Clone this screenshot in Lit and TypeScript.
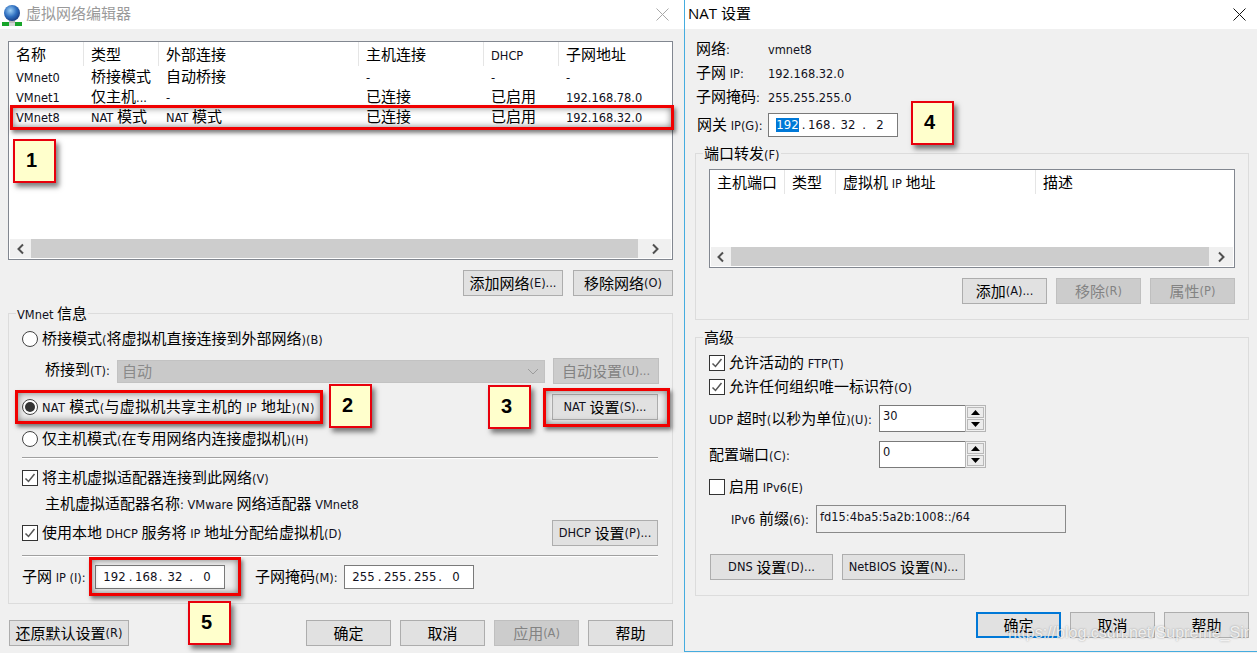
import { LitElement, html, css } from "lit";
import { customElement } from "lit/decorators.js";

/* Splits mixed text into CJK and Latin runs, which the reference draws at different sizes. */
const T = (s: string) =>
  s.split(/([\u3000-\u9fff\uff00-\uffef]+)/).filter(Boolean).map((p) =>
    /[\u3000-\u9fff\uff00-\uffef]/.test(p) ? html`<span class="c">${p}</span>` : html`<span class="l">${p}</span>`
  );

const chevron = (d: "l" | "r") => html`<svg width="10" height="12" viewBox="0 0 10 12"><path d="${d === "l" ? "M7 1.5 2.5 6 7 10.5" : "M3 1.5 7.5 6 3 10.5"}" fill="none" stroke="#505050" stroke-width="2"/></svg>`;
const scrollbar = (a: string, b: string) => html`<div class="sb"><div class="sb-btn ${a}">${chevron("l")}</div><div class="sb-thumb"></div><div class="sb-btn ${b}">${chevron("r")}</div></div>`;
const btn = (s: string, cls = "") => html`<div class="btn ${cls}">${T(s)}</div>`;
const radio = (s: string, on = false) => html`<div class="opt"><span class="radio ${on ? "on" : ""}"></span><span>${T(s)}</span></div>`;
const check = (s: string, on = true) => html`<div class="opt"><span class="chk">${on ? html`<svg width="14" height="14" viewBox="0 0 14 14"><path d="M2.5 7.5 5.5 10.5 11.5 3" fill="none" stroke="#555" stroke-width="1.5"/></svg>` : ""}</span><span>${T(s)}</span></div>`;
const ip = (o: string[], hl = false) => html`<div class="ip">
  <span class="oct"><span class="${hl ? "hl" : ""}">${o[0]}</span></span><span class="oct">.</span><span class="oct">${o[1]}</span><span class="oct">.</span><span class="oct">${o[2]}</span><span class="oct">.</span><span class="oct">${o[3]}</span>
</div>`;
const spin = (v: string) => html`<div class="spin"><div class="spin-in l">${v}</div><div class="spin-btns">
  <div class="spin-b"><svg width="9" height="5" viewBox="0 0 9 5"><path d="M4.5 0 9 5H0z"/></svg></div>
  <div class="spin-b"><svg width="9" height="5" viewBox="0 0 9 5"><path d="M4.5 5 0 0H9z"/></svg></div>
</div></div>`;

const shared = css`
  :host { display: block; font: 15px/20px "Noto Sans CJK SC", "Noto Sans", sans-serif; color: #000; }
  .c { font-family: "Noto Sans CJK SC", sans-serif; font-size: 15px; white-space: pre; }
  .l { font-family: "DejaVu Sans Condensed", "DejaVu Sans", sans-serif; font-stretch: condensed; font-size: 12.7px; white-space: pre; color: #101020; }
  .win { height: 100%; display: flex; flex-direction: column; box-sizing: border-box; }
  .title { height: 29px; box-sizing: border-box; padding-bottom: 3px; flex: none; background: #fff; display: flex; align-items: center; }
  .body { flex: 1; background: #f0f0f0; }
  .close { margin-left: auto; display: flex; margin-top: 3px; }
  .btn { box-sizing: border-box; height: 26px; border: 1px solid #adadad; background: #e1e1e1; display: flex; align-items: center; justify-content: center; white-space: pre; flex: none; }
  .btn.dis { background: #ccc; border-color: #bfbfbf; }
  .btn.dis span { color: #838383; }
  .btn.focus { border: 2px solid #0078d7; }
  .w85 { width: 85px; }
  .w100 { width: 100px; }
  .w106 { width: 106px; }
  .w120 { width: 120px; }
  .w123 { width: 123px; }
  .row { display: flex; align-items: center; }
  .end { justify-content: flex-end; gap: 9px; }
  .push { margin-left: auto; }
  .opt { height: 20px; display: flex; align-items: center; gap: 4px; white-space: pre; }
  .radio { width: 16px; height: 16px; box-sizing: border-box; border: 1px solid #444; border-radius: 50%; background: #fff; flex: none; display: flex; align-items: center; justify-content: center; }
  .radio.on::after { content: ""; width: 10px; height: 10px; border-radius: 50%; background: #333; }
  .chk { width: 16px; height: 16px; box-sizing: border-box; border: 1px solid #333; background: #fff; flex: none; display: flex; align-items: center; justify-content: center; }
  .group { border: 1px solid #dcdcdc; box-sizing: border-box; }
  .legend { height: 20px; margin-top: -11px; margin-left: -6px; padding: 0 1px; background: #f0f0f0; width: fit-content; white-space: pre; }
  .list { box-sizing: border-box; border: 1px solid #828790; background: #fff; display: flex; flex-direction: column; }
  .lh { display: grid; height: 25px; align-items: start; flex: none; }
  .lh > div { height: 24px; line-height: 23px; padding-left: 7px; border-right: 1px solid #e5e5e5; white-space: pre; box-sizing: border-box; }
  .lh > div:last-child { border-right: 0; }
  .lr { display: grid; height: 20px; }
  .lr > div { padding-left: 7px; white-space: pre; line-height: 18px; height: 20px; }
  .grow { flex: 1; }
  .sb { height: 19px; margin: 0 1px 1px; display: flex; background: #f0f0f0; flex: none; }
  .sb-btn { flex: none; display: flex; align-items: center; justify-content: center; }
  .bw20 { width: 20px; }
  .bw21 { width: 21px; }
  .bw24 { width: 24px; }
  .bw33 { width: 33px; }
  .sb-thumb { flex: 1; background: #cdcdcd; }
  .ip { box-sizing: border-box; width: 130px; height: 24px; border: 1px solid #7a7a7a; background: #fff; display: grid; grid-template-columns: 23px 9px 21px 9px 20px 12px 20px; padding-left: 7px; align-items: center; flex: none; }
  .oct { text-align: center; font-family: "DejaVu Sans Condensed", "DejaVu Sans", sans-serif; font-stretch: condensed; font-size: 13px; line-height: 14px; color: #101020; }
  .hl { background: #0078d7; color: #fff; display: block; }
  .sep { height: 1px; background: #a0a0a0; box-shadow: 0 1px 0 #fff; }
  .spin { box-sizing: border-box; width: 107px; height: 27px; display: flex; flex: none; }
  .spin-in { box-sizing: border-box; width: 86px; border: 1px solid #7a7a7a; border-right: 0; background: #fff; padding: 0 0 0 3px; line-height: 20px; }
  .spin-btns { box-sizing: border-box; flex: 1; border: 1px solid #b5b5b5; display: flex; flex-direction: column; padding: 1px; gap: 1px; }
  .spin-b { flex: 1; background: #ececec; border: 1px solid #b9b9b9; display: flex; align-items: center; justify-content: center; }
`;

@customElement("vm-editor")
class VmEditor extends LitElement {
  static styles = [shared, css`
    .icon { margin: 3px 4px 0 2px; display: flex; }
    .ttl { color: #9a9a9a; font-size: 15px; white-space: pre; }
    .close { margin-right: 15px; }
    .body { padding: 12px 11px 0 8px; }
    .list { height: 219px; }
    .lh, .lr { grid-template-columns: 75px 75px 200px 125px 75px 1fr; }
    .actions { margin-top: 10px; gap: 10px; justify-content: flex-end; }
    .group { margin-top: 17px; height: 291px; padding: 0 14px 0 13px; }
    .r1 { margin-top: 6px; }
    .bridge { margin-top: 9px; height: 26px; }
    .bl { margin: 0 0 2px 23px; width: 72px; flex: none; white-space: pre; }
    .select { box-sizing: border-box; width: 428px; height: 23px; background: #c9c9c9; border: 1px solid #c2c2c2; display: flex; align-items: center; padding: 0 5px 0 4px; justify-content: space-between; flex: none; margin-right: 8px; }
    .select span { color: #8a8a8a; }
    .nat { margin-top: 10px; height: 26px; }
    .nat .opt { letter-spacing: .3px; }
    .r3 { margin-top: 9px; }
    .sep1 { margin-top: 8px; }
    .c1 { margin-top: 10px; }
    .sub { margin: 5px 0 0 23px; height: 20px; white-space: pre; }
    .dhcp { margin-top: 7px; height: 26px; }
    .sep2 { margin-top: 9px; }
    .iprow { margin-top: 9px; height: 24px; }
    .il1 { width: 73px; flex: none; white-space: pre; }
    .il2 { width: 89px; margin-left: 30px; flex: none; white-space: pre; }
    .bottom { margin: 16px 0 0 1px; }
    .bottom .right { margin-left: auto; display: flex; gap: 9px; }
    .bottom .btn { padding-bottom: 1px; }
  `];
  render() {
    const cols = (r: string[]) => r.map((c) => html`<div>${T(c)}</div>`);
    return html`<div class="win">
      <div class="title">
        <span class="icon"><svg width="20" height="24" viewBox="0 0 20 24">
          <defs><radialGradient id="g" cx=".4" cy=".35" r=".7"><stop offset="0" stop-color="#9fd0f5"/><stop offset=".55" stop-color="#2f6fc0"/><stop offset="1" stop-color="#16387f"/></radialGradient></defs>
          <rect x="7" y="16" width="6" height="4" fill="#b9b9b9"/><rect x="0" y="19" width="7" height="4" fill="#18a52a"/><rect x="13" y="19" width="7" height="4" fill="#18a52a"/><rect x="7" y="20" width="6" height="3" fill="#d8d8d8"/>
          <circle cx="10" cy="10" r="8" fill="url(#g)"/></svg></span>
        <span class="ttl">虚拟网络编辑器</span>
        <span class="close"><svg width="13" height="13" viewBox="0 0 13 13"><path d="M.5.5 12.5 12.5M12.5.5.5 12.5" stroke="#a8a8a8" fill="none"/></svg></span>
      </div>
      <div class="body">
        <div class="list">
          <div class="lh">${cols(["名称", "类型", "外部连接", "主机连接", "DHCP", "子网地址"])}</div>
          <div class="lr">${cols(["VMnet0", "桥接模式", "自动桥接", "-", "-", "-"])}</div>
          <div class="lr">${cols(["VMnet1", "仅主机...", "-", "已连接", "已启用", "192.168.78.0"])}</div>
          <div class="lr">${cols(["VMnet8", "NAT 模式", "NAT 模式", "已连接", "已启用", "192.168.32.0"])}</div>
          <div class="grow"></div>
          ${scrollbar("bw21", "bw33")}
        </div>
        <div class="row actions">${btn("添加网络(E)...", "w100")}${btn("移除网络(O)", "w100")}</div>
        <div class="group">
          <div class="legend">${T("VMnet 信息")}</div>
          <div class="r1">${radio("桥接模式(将虚拟机直接连接到外部网络)(B)")}</div>
          <div class="row bridge">
            <div class="bl">${T("桥接到(T):")}</div>
            <div class="select"><span class="c">自动</span><svg width="12" height="7" viewBox="0 0 12 7"><path d="M1 1 6 6 11 1" fill="none" stroke="#9c9c9c"/></svg></div>
            ${btn("自动设置(U)...", "w106 dis")}
          </div>
          <div class="row nat">${radio("NAT 模式(与虚拟机共享主机的 IP 地址)(N)", true)}<div class="push">${btn("NAT 设置(S)...", "w106")}</div></div>
          <div class="r3">${radio("仅主机模式(在专用网络内连接虚拟机)(H)")}</div>
          <div class="sep sep1"></div>
          <div class="c1">${check("将主机虚拟适配器连接到此网络(V)")}</div>
          <div class="sub">${T("主机虚拟适配器名称: VMware 网络适配器 VMnet8")}</div>
          <div class="row dhcp">${check("使用本地 DHCP 服务将 IP 地址分配给虚拟机(D)")}<div class="push">${btn("DHCP 设置(P)...", "w106")}</div></div>
          <div class="sep sep2"></div>
          <div class="row iprow">
            <div class="il1">${T("子网 IP (I):")}</div>${ip(["192", "168", "32", "0"])}
            <div class="il2">${T("子网掩码(M):")}</div>${ip(["255", "255", "255", "0"])}
          </div>
        </div>
        <div class="row bottom">
          ${btn("还原默认设置(R)", "w120")}
          <div class="right">${btn("确定", "w85")}${btn("取消", "w85")}${btn("应用(A)", "w85 dis")}${btn("帮助", "w85")}</div>
        </div>
      </div>
    </div>`;
  }
}

@customElement("nat-settings")
class NatSettings extends LitElement {
  static styles = [shared, css`
    .win { border-left: 1px solid #45acdf; border-bottom: 1px solid #45acdf; }
    .ttl { margin-left: 3px; white-space: pre; }
    .ttl .l { font-family: "Open Sans", sans-serif; font-size: 15px; font-stretch: normal; color: #000; }
    .ttl .c { font-size: 15px; }
    .close { margin-right: 12px; }
    .body { padding: 10px 9px 0 10px; }
    .info { height: 20px; margin: 0 0 4px 1px; white-space: pre; }
    .info > div:first-child { width: 72px; flex: none; }
    .gw { margin: 6px 0 0 2px; height: 24px; }
    .gw > div:first-child { width: 71px; flex: none; white-space: pre; }
    .group { padding: 0 13px; width: 554px; }
    .g1 { margin-top: 16px; height: 167px; }
    .g2 { margin-top: 17px; height: 259px; }
    .list { margin-top: 6px; height: 99px; }
    .lh { grid-template-columns: 75px 51px 200px 1fr; }
    .acts { margin-top: 10px; justify-content: flex-end; gap: 9px; }
    .c1 { margin-top: 6px; }
    .c2 { margin-top: 4px; }
    .sr { height: 27px; }
    .sr > div:first-child { width: 170px; flex: none; white-space: pre; }
    .s1 { margin-top: 8px; }
    .s2 { margin-top: 9px; }
    .c3 { margin-top: 9px; }
    .v6 { margin-top: 8px; height: 28px; }
    .v6l { width: 85px; margin-left: 22px; flex: none; white-space: pre; }
    .v6in { box-sizing: border-box; width: 250px; height: 28px; border: 1px solid #8a8a8a; padding: 0 0 4px 3px; display: flex; align-items: center; }
    .dns { margin: 21px 0 0 1px; gap: 9px; }
    .bottom { margin-top: 16px; }
    .bottom .btn { padding-bottom: 1px; }
  `];
  render() {
    const cols = (r: string[]) => r.map((c) => html`<div>${T(c)}</div>`);
    return html`<div class="win">
      <div class="title">
        <span class="ttl">${T("NAT 设置")}</span>
        <span class="close"><svg width="13" height="13" viewBox="0 0 13 13"><path d="M.5.5 12.5 12.5M12.5.5.5 12.5" stroke="#111" fill="none"/></svg></span>
      </div>
      <div class="body">
        <div class="row info"><div>${T("网络:")}</div><div>${T("vmnet8")}</div></div>
        <div class="row info"><div>${T("子网 IP:")}</div><div>${T("192.168.32.0")}</div></div>
        <div class="row info"><div>${T("子网掩码:")}</div><div>${T("255.255.255.0")}</div></div>
        <div class="row gw"><div>${T("网关 IP(G):")}</div>${ip(["192", "168", "32", "2"], true)}</div>
        <div class="group g1">
          <div class="legend">${T("端口转发(F)")}</div>
          <div class="list">
            <div class="lh">${cols(["主机端口", "类型", "虚拟机 IP 地址", "描述"])}</div>
            <div class="grow"></div>
            ${scrollbar("bw20", "bw24")}
          </div>
          <div class="row acts">${btn("添加(A)...", "w85")}${btn("移除(R)", "w85 dis")}${btn("属性(P)", "w85 dis")}</div>
        </div>
        <div class="group g2">
          <div class="legend">${T("高级")}</div>
          <div class="c1">${check("允许活动的 FTP(T)")}</div>
          <div class="c2">${check("允许任何组织唯一标识符(O)")}</div>
          <div class="row sr s1"><div>${T("UDP 超时(以秒为单位)(U):")}</div>${spin("30")}</div>
          <div class="row sr s2"><div>${T("配置端口(C):")}</div>${spin("0")}</div>
          <div class="c3">${check("启用 IPv6(E)", false)}</div>
          <div class="row v6"><div class="v6l">${T("IPv6 前缀(6):")}</div><div class="v6in l">fd15:4ba5:5a2b:1008::/64</div></div>
          <div class="row dns">${btn("DNS 设置(D)...", "w123")}${btn("NetBIOS 设置(N)...", "w123")}</div>
        </div>
        <div class="row end bottom">${btn("确定", "w85 focus")}${btn("取消", "w85")}${btn("帮助", "w85")}</div>
      </div>
    </div>`;
  }
}

const boxes = [
  [10, 105, 664, 25],
  [15, 390, 308, 34],
  [543, 388, 127, 39],
  [89, 557, 152, 39],
];
const badges = [
  ["1", 13, 139],
  ["2", 329, 384],
  ["3", 488, 385],
  ["4", 911, 101],
  ["5", 188, 601],
];

@customElement("app-root")
export class AppRoot extends LitElement {
  static styles = css`
    :host { display: block; position: relative; width: 1257px; height: 653px; overflow: hidden; background: #f0f0f0; }
    .desk { display: flex; height: 100%; }
    vm-editor { width: 684px; flex: none; height: 653px; }
    nat-settings { flex: 1; height: 652px; }
    .box { position: absolute; box-sizing: border-box; border: 3px solid #f00000; box-shadow: 2px 3px 4px rgba(0,0,0,.5), inset 0 0 7px rgba(0,0,0,.5); }
    .badge { position: absolute; box-sizing: border-box; width: 43px; height: 44px; border: 2px solid #e8000c; background: #ffffcc; box-shadow: 3px 4px 5px rgba(0,0,0,.5); display: flex; align-items: center; justify-content: center; font: bold 20px "Liberation Sans", sans-serif; color: #000; padding: 0 6px 2px 0; }
    .wm { position: absolute; left: 1008px; top: 624px; font: 16px/18px "Liberation Sans", sans-serif; color: rgba(255,255,255,.8); text-shadow: 0 0 2px rgba(0,0,0,.35); white-space: pre; }
  `;
  render() {
    return html`<div class="desk"><vm-editor></vm-editor><nat-settings></nat-settings></div>
      ${boxes.map((b) => html`<div class="box" style="left:${b[0]}px;top:${b[1]}px;width:${b[2]}px;height:${b[3]}px"></div>`)}
      ${badges.map((b) => html`<div class="badge" style="left:${b[1]}px;top:${b[2]}px">${b[0]}</div>`)}
      <div class="wm">https://blog.csdn.net/Supreme_Sir</div>`;
  }
}
